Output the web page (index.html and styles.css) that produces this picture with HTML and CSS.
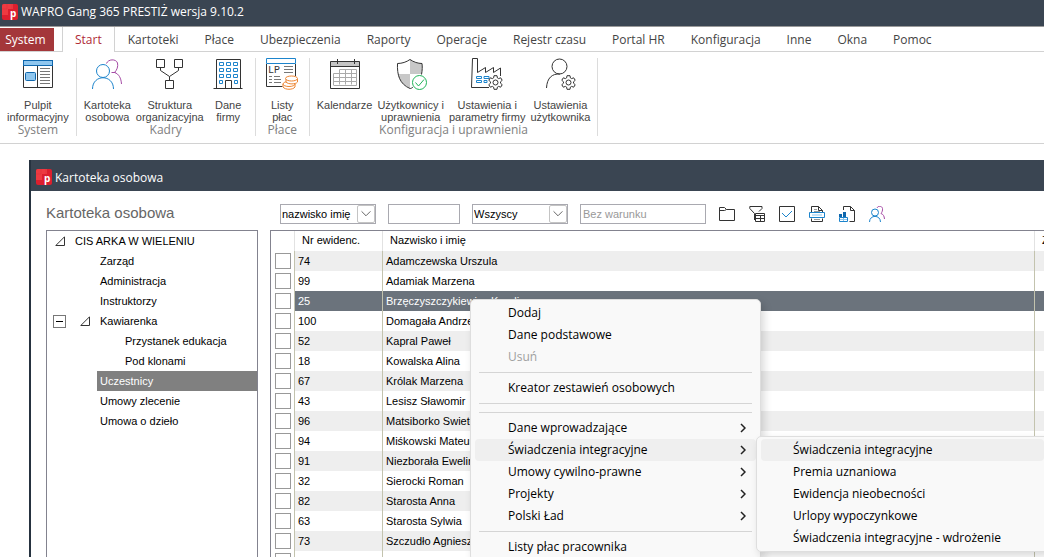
FILE: index.html
```html
<!DOCTYPE html>
<html lang="pl">
<head>
    <meta charset="UTF-8">
    <meta name="viewport" content="width=device-width, initial-scale=1.0">
    <title>WAPRO Gang 365 PRESTIŻ</title>
    <link rel="stylesheet" href="styles.css">
</head>
<body>

    <header class="titlebar">
        <svg class="logo" viewBox="0 0 16 16"><rect width="16" height="16" rx="2" fill="#dc1f2e"/><path d="M2 0h9v5H6v6H0V2a2 2 0 0 1 2-2z" fill="#ee3a41"/><path d="M5 0v5H0M10 0v5" stroke="#d8303a" stroke-width=".5"/><text x="8" y="13" class="logo-letter">p</text></svg>
        <span>WAPRO Gang 365 PRESTIŻ wersja 9.10.2</span>
    </header>

    <nav class="tabs">
        <button class="tab-system">System</button>
        <a class="tab active" href="#">Start</a>
        <a class="tab" href="#">Kartoteki</a>
        <a class="tab" href="#">Płace</a>
        <a class="tab" href="#">Ubezpieczenia</a>
        <a class="tab" href="#">Raporty</a>
        <a class="tab" href="#">Operacje</a>
        <a class="tab" href="#">Rejestr czasu</a>
        <a class="tab" href="#">Portal HR</a>
        <a class="tab" href="#">Konfiguracja</a>
        <a class="tab" href="#">Inne</a>
        <a class="tab" href="#">Okna</a>
        <a class="tab" href="#">Pomoc</a>
    </nav>

    <!-- Ribbon -->
    <div class="ribbon">
        <section class="group">
            <div class="group-items">
                <button class="tool">
                    <svg viewBox="0 0 32 32"><path d="M1.5 8v21.500h29V8M15.500 8v21" class="ink"/><rect x="1.500" y="2.500" width="29" height="5" fill="#8fc6ee" stroke="#0f67ad"/><rect x="3.500" y="14.500" width="10" height="8" rx="1" fill="#8fc6ee" stroke="#0f67ad"/><path d="M18 10.500h10M18 13.500h10M18 16.500h10M18 19.500h10M18 22.500h10M18 25.500h10" stroke="#777"/></svg>
                    <span>Pulpit<br>informacyjny</span>
                </button>
            </div>
            <div class="group-name">System</div>
        </section>
        <section class="group">
            <div class="group-items">
                <button class="tool">
                    <svg viewBox="0 0 32 32"><path d="M15.500 5.500C17 1 25 .5 26.500 5c.8 3.500-.5 7-3 9.500 4.500 1.500 6.500 5.500 7 11.500M20.500 14.500h4" class="purple"/><circle cx="12" cy="13" r="6.500" class="blue" fill="#fff"/><path d="M1.500 31c0-15 21-15 21 0" class="blue"/></svg>
                    <span>Kartoteka<br>osobowa</span>
                </button>
                <button class="tool">
                    <svg viewBox="0 0 32 32"><path d="M2.500 1.500h8v8h-8zM20.500 1.500h8v8h-8zM11.500 22.500h8v8h-8zM6.500 9.500v3l9 6 9-6v-3M15.500 18.500v4" class="ink"/></svg>
                    <span>Struktura<br>organizacyjna</span>
                </button>
                <button class="tool">
                    <svg viewBox="0 0 32 32"><path d="M4.500 30V1.500h24V30M1.500 30.500h29M13.500 30v-7.500h6V30" class="ink"/><path d="M7.500 4.500h4v3h-4zM14.500 4.500h4v3h-4zM21.500 4.500h4v3h-4zM7.500 10.500h4v3h-4zM14.500 10.500h4v3h-4zM21.500 10.500h4v3h-4zM7.500 16.500h4v3h-4zM14.500 16.500h4v3h-4zM21.500 16.500h4v3h-4zM7.500 22.500h3v3h-3zM22.500 22.500h3v3h-3z" class="blue"/></svg>
                    <span>Dane<br>firmy</span>
                </button>
            </div>
            <div class="group-name">Kadry</div>
        </section>
        <section class="group">
            <div class="group-items">
                <button class="tool">
                    <svg viewBox="0 0 32 32"><path d="M.5 6v22.500h16M29.500 6v12" class="ink"/><path d="M.5.5h29v5H.500z" class="blue"/><text x="2" y="15" class="lp">LP</text><path d="M18 8.500h9M18 11.500h9M18 14.500h9M3 18.500h3M8 18.500h6M3 21.500h3M8 21.500h7M3 24.500h3M8 24.500h7" stroke="#777"/><g class="orange" fill="#fff"><path d="M17 26v3c2 3 10 3 12 0v-3"/><ellipse cx="23" cy="26" rx="6" ry="2.500"/><path d="M20 21v3c2 2.500 10 2.500 11.500 0v-3"/><ellipse cx="25.500" cy="20.500" rx="6" ry="2.500"/></g></svg>
                    <span>Listy<br>płac</span>
                </button>
            </div>
            <div class="group-name">Płace</div>
        </section>
        <section class="group">
            <div class="group-items">
                <button class="tool">
                    <svg viewBox="0 0 32 32"><path d="M1 3.500h30v5H1z" fill="#c4c4c4"/><path d="M1.500 3.500h29v27h-29zM1 8.500h30M8.500 1v5M25.500 1v5" class="ink"/><path d="M10.500 11.500h17v12M10.500 11.500v15M4.500 15.500h23M4.500 19.500h23M4.500 23.500h23M4.500 15.500v11.500M16.500 11.500v15M22.500 11.500v15M4.500 27.500h23v-4" stroke="#aaa"/></svg>
                    <span>Kalendarze</span>
                </button>
                <button class="tool">
                    <svg viewBox="0 0 32 32"><path d="M15 1.500C18 4 22 5.500 27 5.500V16H15zM15 16v14C8 27 3.500 22 3 16z" fill="#c8c8c8"/><path d="M15 1.500C11.500 4 7 5.500 2.500 5.500 2 17 4.500 26 15 30.500c1 0 2-.5 3-1.500M15 1.500c3.500 2.500 8 4 12 4 .5 3 .3 7-.5 11" class="ink"/><circle cx="24.500" cy="24.500" r="7" fill="#fff" stroke="#20b358"/><path d="m20.500 24.500 3 3.500 5.500-6.500" stroke="#20b358"/></svg>
                    <span>Użytkownicy i<br>uprawnienia</span>
                </button>
                <button class="tool">
                    <svg viewBox="0 0 32 32"><path d="M18 29.500H.500L1.500.5h5v14l8-5v5l8-5v5l7-4.500v8" class="ink"/><path d="M5.500 18.500h5v2h-5zM5.500 22.500h5v2h-5zM13 18.500h5v2h-5zM13 22.500h3v2h-3z" class="blue"/><path transform="translate(24.500 24.500)" d="M-1.500-6.800 1.500-6.800 1.900-4.600 3.100-3.900 5.200-4.700 6.700-2.200 5-.7 5 .7 6.700 2.200 5.200 4.700 3.100 3.900 1.900 4.600 1.500 6.800-1.500 6.800-1.900 4.600-3.100 3.900-5.200 4.700-6.700 2.200-5 .7-5-.7-6.700-2.200-5.200-4.700-3.100-3.900-1.900-4.600z" class="ink" fill="#fff"/><circle cx="24.500" cy="24.500" r="2.500" class="ink"/></svg>
                    <span>Ustawienia i<br>parametry firmy</span>
                </button>
                <button class="tool">
                    <svg viewBox="0 0 32 32"><circle cx="15.500" cy="8.500" r="7.500" class="ink"/><path d="M2.500 30C3 20 8 15.500 16 16" class="ink"/><path transform="translate(24.500 24.500)" d="M-1.500-6.800 1.500-6.800 1.900-4.600 3.100-3.900 5.200-4.700 6.700-2.200 5-.7 5 .7 6.700 2.200 5.200 4.700 3.100 3.900 1.900 4.600 1.500 6.800-1.500 6.800-1.900 4.600-3.100 3.900-5.200 4.700-6.700 2.200-5 .7-5-.7-6.700-2.200-5.200-4.700-3.100-3.900-1.900-4.600z" class="ink"/><circle cx="24.500" cy="24.500" r="2.500" class="ink"/></svg>
                    <span>Ustawienia<br>użytkownika</span>
                </button>
            </div>
            <div class="group-name">Konfiguracja i uprawnienia</div>
        </section>
    </div>

    <!-- Window -->
    <main class="window">
        <div class="window-title">
            <svg class="logo" viewBox="0 0 16 16"><rect width="16" height="16" rx="2" fill="#dc1f2e"/><path d="M2 0h9v5H6v6H0V2a2 2 0 0 1 2-2z" fill="#ee3a41"/><path d="M5 0v5H0M10 0v5" stroke="#d8303a" stroke-width=".5"/><text x="8" y="13" class="logo-letter">p</text></svg>
            <span>Kartoteka osobowa</span>
        </div>

        <div class="window-body">
            <aside class="side">
                <h1>Kartoteka osobowa</h1>
                <ul class="tree">
                    <li class="root"><svg class="tri" viewBox="0 0 10 10"><path d="M.8 9.500h8.700V.8z"/></svg>CIS ARKA W WIELENIU</li>
                    <li>Zarząd</li>
                    <li>Administracja</li>
                    <li>Instruktorzy</li>
                    <li class="branch"><button class="fold" aria-label="Zwiń"></button><svg class="tri" viewBox="0 0 10 10"><path d="M.8 9.500h8.700V.8z"/></svg>Kawiarenka</li>
                    <li class="deep">Przystanek edukacja</li>
                    <li class="deep">Pod klonami</li>
                    <li><span class="selected">Uczestnicy</span></li>
                    <li>Umowy zlecenie</li>
                    <li>Umowa o dzieło</li>
                </ul>
            </aside>

            <section class="content">
                <div class="toolbar">
                    <div class="combo">
                        <select aria-label="Szukaj według"><option>nazwisko imię</option></select>
                        <svg viewBox="0 0 18 18"><path d="m4 6 5 5 5-5"/></svg>
                    </div>
                    <input class="search" type="text" aria-label="Szukaj">
                    <div class="combo">
                        <select aria-label="Zakres"><option>Wszyscy</option></select>
                        <svg viewBox="0 0 18 18"><path d="m4 6 5 5 5-5"/></svg>
                    </div>
                    <input class="filter" type="text" aria-label="Warunek" placeholder="Bez warunku">
                    <div class="icons">
                        <button aria-label="Otwórz"><svg viewBox="0 0 16 16"><path d="M.5 14.500V1.500h5l2 2h8v11zM.5 4.500h5l2-1" class="ink"/></svg></button>
                        <button aria-label="Filtr"><svg viewBox="0 0 16 16"><path d="M5.500 14v-6.500L.8 2.500V.500H13v2L10 5.500" class="ink"/><path d="M6.500 7.500h9v8h-9zM7 9.500h8M7 12.500h8M11.500 10v5" class="ink"/></svg></button>
                        <button aria-label="Zaznacz"><svg viewBox="0 0 16 16"><path d="M.5.500h15v15H.500z" class="ink"/><path d="m3 7 4 4 6-6" class="blue"/></svg></button>
                        <button aria-label="Drukuj"><svg viewBox="0 0 16 16"><path d="M2.500 6V.500h7l4 4V6M9.500.500v4h4M2.500 12.500v3h11v-3" class="ink"/><path d="M5 3.500h3M5 5.500h6M5 13.500h6" stroke="#999"/><path d="M.5 6.500h15v5H.500z" class="blue" fill="#fff"/><path d="M3 8.500h10v1H3z" fill="#8fc6ee"/></svg></button>
                        <button aria-label="Raport"><svg viewBox="0 0 16 16"><path d="M4.500 4V.500h7l4 4v11h-5M11.500.500v4h4" class="ink"/><path d="M.500 11.500h8v4h-8z" class="blue"/><path d="M4.500 12v3M1 13.500h7" stroke="#8fc6ee"/><path d="M0 8h3v3H0zM4 6h3v5H4z" fill="#0f67ad"/></svg></button>
                        <button aria-label="Osoby"><svg viewBox="0 0 16 16"><path d="M8 2C9-.5 13-.3 13.500 2.500c.2 2-.3 3.500-1.500 5 2.300.8 3.200 2.500 3.500 5.500" class="purple"/><circle cx="6" cy="6.500" r="3.500" class="blue"/><path d="M.5 16c0-7.500 11-7.500 11 0" class="blue"/></svg></button>
                    </div>
                </div>

                <table class="grid">
                    <colgroup><col class="c-check"><col class="c-nr"><col><col class="c-last"></colgroup>
                    <thead>
                        <tr><th></th><th>Nr ewidenc.</th><th>Nazwisko i imię</th><th>Z</th></tr>
                    </thead>
                    <tbody>
                        <tr><td><input type="checkbox" aria-label="74"></td><td>74</td><td>Adamczewska Urszula</td><td></td></tr>
                        <tr><td><input type="checkbox" aria-label="99"></td><td>99</td><td>Adamiak Marzena</td><td></td></tr>
                        <tr class="current"><td><input type="checkbox" aria-label="25"></td><td>25</td><td>Brzęczyszczykiewicz Karolina</td><td></td></tr>
                        <tr><td><input type="checkbox" aria-label="100"></td><td>100</td><td>Domagała Andrzej</td><td></td></tr>
                        <tr><td><input type="checkbox" aria-label="52"></td><td>52</td><td>Kapral Paweł</td><td></td></tr>
                        <tr><td><input type="checkbox" aria-label="18"></td><td>18</td><td>Kowalska Alina</td><td></td></tr>
                        <tr><td><input type="checkbox" aria-label="67"></td><td>67</td><td>Królak Marzena</td><td></td></tr>
                        <tr><td><input type="checkbox" aria-label="43"></td><td>43</td><td>Lesisz Sławomir</td><td></td></tr>
                        <tr><td><input type="checkbox" aria-label="96"></td><td>96</td><td>Matsiborko Swietłana</td><td></td></tr>
                        <tr><td><input type="checkbox" aria-label="94"></td><td>94</td><td>Miśkowski Mateusz</td><td></td></tr>
                        <tr><td><input type="checkbox" aria-label="91"></td><td>91</td><td>Niezborała Ewelina</td><td></td></tr>
                        <tr><td><input type="checkbox" aria-label="32"></td><td>32</td><td>Sierocki Roman</td><td></td></tr>
                        <tr><td><input type="checkbox" aria-label="82"></td><td>82</td><td>Starosta Anna</td><td></td></tr>
                        <tr><td><input type="checkbox" aria-label="63"></td><td>63</td><td>Starosta Sylwia</td><td></td></tr>
                        <tr><td><input type="checkbox" aria-label="73"></td><td>73</td><td>Szczudło Agnieszka</td><td></td></tr>
                        <tr><td><input type="checkbox" aria-label="Wiersz"></td><td></td><td></td><td></td></tr>
                    </tbody>
                </table>
            </section>
        </div>
    </main>

    <!-- Context menu -->
    <div class="menu context">
        <button>Dodaj</button>
        <button>Dane podstawowe</button>
        <button disabled>Usuń</button>
        <hr>
        <button>Kreator zestawień osobowych</button>
        <hr>
        <hr>
        <button>Dane wprowadzające<svg viewBox="0 0 6 10"><path d="m1 1 4 4-4 4"/></svg></button>
        <button class="hot">Świadczenia integracyjne<svg viewBox="0 0 6 10"><path d="m1 1 4 4-4 4"/></svg></button>
        <button>Umowy cywilno-prawne<svg viewBox="0 0 6 10"><path d="m1 1 4 4-4 4"/></svg></button>
        <button>Projekty<svg viewBox="0 0 6 10"><path d="m1 1 4 4-4 4"/></svg></button>
        <button>Polski Ład<svg viewBox="0 0 6 10"><path d="m1 1 4 4-4 4"/></svg></button>
        <hr>
        <button>Listy płac pracownika</button>
    </div>

    <div class="menu submenu">
        <button class="hot">Świadczenia integracyjne</button>
        <button>Premia uznaniowa</button>
        <button>Ewidencja nieobecności</button>
        <button>Urlopy wypoczynkowe</button>
        <button>Świadczenia integracyjne - wdrożenie</button>
    </div>

</body>
</html>
```

FILE: styles.css
```css
/* General */
* {
    box-sizing: border-box;
}

body {
    margin: 0;
    height: 100vh;
    overflow: hidden;
    position: relative;
    display: flex;
    flex-direction: column;
    background: #fff;
    color: #000;
    font-family: "Liberation Sans", Arial, sans-serif;
    font-size: 11px;
}

button, input, select {
    font: inherit;
    color: inherit;
}

button {
    background: none;
    border: none;
    padding: 0;
}

svg {
    fill: none;
    display: block;
    flex: none;
}

.ink { stroke: #333; }
.blue { stroke: #1c84cc; }
.purple { stroke: #a54ba5; }
.orange { stroke: #ee8430; }

.lp {
    font: 10px "Liberation Mono", monospace;
    fill: #333;
}

.logo {
    width: 16px;
    height: 16px;
}

.logo-letter {
    font: bold 10px "Open Sans", sans-serif;
    fill: #fff;
}

/* Title bar and tabs */
.titlebar, .tabs, .group-name, .window-title, .menu {
    font-family: "Open Sans", "Noto Sans", sans-serif;
    font-size: 12px;
}

.titlebar {
    flex: none;
    height: 27px;
    display: flex;
    align-items: center;
    gap: 3px;
    padding: 0 2px 3px;
    background: #3a4552;
    border-bottom: 1px solid #9a9a9a;
    color: #fff;
}

.tabs {
    flex: none;
    height: 25px;
    display: flex;
    border-bottom: 1px solid #d2d2d2;
    margin-bottom: 6px;
}

.tab-system {
    width: 54px;
    height: 23px;
    margin: 1px 8px 0 0;
    padding-right: 3px;
    background: #a4373a;
    color: #fff;
}

.tab {
    height: 25px;
    padding: 0 13px;
    line-height: 25px;
    color: #444;
    text-decoration: none;
    white-space: nowrap;
}

.tab.active {
    padding: 0 12px;
    background: #fff;
    border: 1px solid #d2d2d2;
    border-width: 0 1px;
    color: #b02a37;
}

/* Ribbon */
.ribbon {
    flex: none;
    height: 86px;
    display: flex;
    align-items: flex-start;
    border-bottom: 1px solid #d2d2d2;
}

.group {
    height: 78px;
    padding: 0 7px;
    border-right: 1px solid #dcdcdc;
}

.group-items {
    display: flex;
    gap: 5px;
    height: 66px;
}

.tool {
    display: flex;
    flex-direction: column;
    align-items: center;
    gap: 9px;
    min-width: 39px;
    line-height: 12px;
    color: #444;
    white-space: nowrap;
}

.tool svg {
    width: 32px;
    height: 32px;
}

.group-name {
    line-height: 12px;
    text-align: center;
    color: #808080;
}

/* Window */
.window {
    flex: 1;
    min-height: 0;
    display: flex;
    flex-direction: column;
    margin: 16px 0 0 29px;
    border-left: 2px solid #26323f;
}

.window-title {
    flex: none;
    height: 31px;
    display: flex;
    align-items: center;
    gap: 3px;
    padding: 3px 5px 0;
    background: #3a4552;
    color: #fff;
}

.window-body {
    flex: 1;
    min-height: 0;
    display: grid;
    grid-template-columns: 212px minmax(0, 1fr);
    column-gap: 12px;
    padding-left: 15px;
}

.side {
    display: flex;
    flex-direction: column;
}

.side h1 {
    margin: 0;
    height: 39px;
    padding-top: 6px;
    line-height: 32px;
    font-size: 15px;
    font-weight: normal;
    color: #666;
}

.tree {
    flex: 1;
    margin: 0;
    padding: 0;
    list-style: none;
    border: 1px solid #83838f;
    border-bottom: none;
    line-height: 20px;
}

.tree li {
    display: flex;
    align-items: center;
    height: 20px;
    padding-left: 53px;
}

.tree .root {
    padding-left: 8px;
}

.tree .branch {
    padding-left: 6px;
}

.tree .deep {
    padding-left: 78px;
}

.tri {
    width: 10px;
    height: 10px;
    margin-right: 10px;
    stroke: #333;
}

.fold {
    width: 13px;
    height: 13px;
    margin-right: 14px;
    border: 1px solid #777;
    display: grid;
    place-items: center;
}

.fold::before {
    content: "";
    width: 7px;
    height: 1px;
    background: #000;
}

.selected {
    flex: 1;
    margin-left: -3px;
    padding-left: 3px;
    background: #808080;
    color: #fff;
}

/* Toolbar */
.toolbar {
    height: 39px;
    display: flex;
    align-items: center;
    gap: 12px;
    padding: 7px 0 0 10px;
}

.combo {
    display: grid;
    width: 96px;
    height: 20px;
}

.combo select, .combo svg {
    grid-area: 1 / 1;
}

.combo select, .search, .filter {
    height: 20px;
    border: 1px solid #a9a9b0;
    border-radius: 0;
    background: #fff;
    appearance: none;
    outline: none;
    padding: 0 2px;
}

.combo select {
    padding: 0 1px;
}

.combo svg {
    width: 18px;
    height: 18px;
    justify-self: end;
    align-self: center;
    margin-right: 1px;
    border: 1px solid #c4c4c4;
    border-radius: 2px;
    stroke: #555;
    pointer-events: none;
}

.search {
    width: 72px;
}

.filter {
    width: 126px;
}

.filter::placeholder {
    color: #999;
}

.icons {
    display: flex;
    gap: 14px;
    padding-left: 1px;
}

.icons svg {
    width: 16px;
    height: 16px;
}

/* Table */
.grid {
    width: 100%;
    table-layout: fixed;
    border-collapse: separate;
    border-spacing: 0;
    border: 1px solid #83838f;
    border-width: 1px 0 0 1px;
    white-space: nowrap;
}

.c-check { width: 24px; }
.c-nr { width: 88px; }
.c-last { width: 9px; }

.grid th {
    height: 20px;
    padding: 0 7px 2px;
    border-right: 1px solid #e2e2e2;
    font-weight: normal;
    text-align: left;
}

.grid td {
    height: 20px;
    padding: 0 3px;
    border-right: 1px solid #c3c3ae;
    overflow: hidden;
}

.grid td:first-child {
    padding: 0 4px;
}

.grid td:last-child, .grid th:last-child {
    border-right: none;
    overflow: hidden;
}

.grid tbody tr:nth-child(odd) td:not(:first-child) {
    background: #eee;
}

.grid tbody tr.current td:not(:first-child) {
    background: #6b737c;
    color: #fff;
}

.grid input {
    appearance: none;
    display: block;
    width: 16px;
    height: 16px;
    margin: 0;
    border: 1px solid #999;
    background: #fff;
}

/* Menus */
.menu {
    position: absolute;
    display: flex;
    flex-direction: column;
    padding: 2px 4px;
    background: #f9f9f9;
    border: 1px solid #dedede;
    border-radius: 5px;
    box-shadow: 3px 4px 8px rgba(0, 0, 0, 0.15);
}

.context {
    left: 470px;
    top: 299px;
    width: 291px;
}

.submenu {
    left: 756px;
    top: 436px;
    width: 293px;
}

.menu button {
    flex: none;
    display: flex;
    align-items: center;
    justify-content: space-between;
    height: 22px;
    padding: 0 10px 1px 33px;
    border-radius: 4px;
    white-space: nowrap;
}

.submenu button {
    padding-left: 32px;
}

.menu button:disabled {
    color: #a0a0a0;
}

.menu .hot {
    background: #efefef;
}

.menu svg {
    width: 6px;
    height: 10px;
    stroke: #222;
    stroke-width: 1.5;
}

.menu hr {
    flex: none;
    height: 1px;
    margin: 4px;
    border: none;
    background: #d5d5d5;
}
```
